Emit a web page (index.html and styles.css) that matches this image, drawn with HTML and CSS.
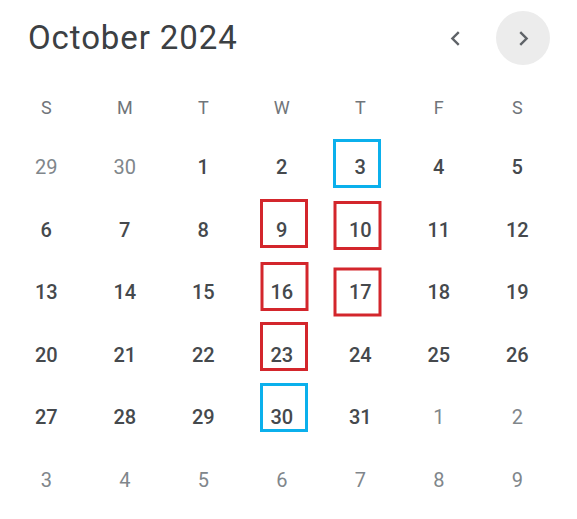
FILE: index.html
```html
<!DOCTYPE html>
<html>
<head>
<meta charset="utf-8">
<link rel="stylesheet" href="styles.css">
</head>
<body>
<div class="cal">
  <div class="head">
    <div class="title">October 2024</div>
    <div class="nav">
      <button class="navbtn" aria-label="Previous month">
        <svg width="24" height="24" viewBox="0 0 24 24"><path d="M15.4 7.4 14 6l-6 6 6 6 1.4-1.4L10.8 12z" fill="#5f6368"/></svg>
      </button>
      <button class="navbtn hover" aria-label="Next month">
        <svg width="24" height="24" viewBox="0 0 24 24"><path d="M8.6 7.4 10 6l6 6-6 6-1.4-1.4 4.6-4.6z" fill="#5f6368"/></svg>
      </button>
    </div>
  </div>
  <div class="grid">
    <div class="dow">S</div><div class="dow">M</div><div class="dow">T</div><div class="dow">W</div><div class="dow">T</div><div class="dow">F</div><div class="dow">S</div>

    <div class="day other">29</div><div class="day other">30</div><div class="day">1</div><div class="day">2</div><div class="day"><span class="mark blue m3"></span>3</div><div class="day">4</div><div class="day">5</div>

    <div class="day">6</div><div class="day">7</div><div class="day">8</div><div class="day"><span class="mark red m9"></span>9</div><div class="day"><span class="mark red m10"></span>10</div><div class="day">11</div><div class="day">12</div>

    <div class="day">13</div><div class="day">14</div><div class="day">15</div><div class="day"><span class="mark red m16"></span>16</div><div class="day"><span class="mark red m17"></span>17</div><div class="day">18</div><div class="day">19</div>

    <div class="day">20</div><div class="day">21</div><div class="day">22</div><div class="day"><span class="mark red m23"></span>23</div><div class="day">24</div><div class="day">25</div><div class="day">26</div>

    <div class="day">27</div><div class="day">28</div><div class="day">29</div><div class="day"><span class="mark blue m30"></span>30</div><div class="day">31</div><div class="day other">1</div><div class="day other">2</div>

    <div class="day other">3</div><div class="day other">4</div><div class="day other">5</div><div class="day other">6</div><div class="day other">7</div><div class="day other">8</div><div class="day other">9</div>
  </div>
</div>
</body>
</html>
```

FILE: styles.css
```css
html, body {
  margin: 0;
  padding: 0;
  background: #fff;
}
body {
  font-family: Roboto, "Noto Sans", sans-serif;
  color: #3c4043;
}
.cal {
  width: 577px;
  height: 519px;
  overflow: hidden;
}
.head {
  display: flex;
  align-items: center;
  justify-content: space-between;
  height: 78px;
  padding: 0 27px 0 28px;
  box-sizing: border-box;
}
.title {
  font-size: 33px;
  font-weight: 400;
  letter-spacing: 0.9px;
  color: #3c4043;
  margin-top: -3px;
}
.nav {
  display: flex;
  align-items: center;
  gap: 14px;
  margin-top: -2px;
}
.navbtn {
  width: 54px;
  height: 54px;
  border: 0;
  border-radius: 50%;
  background: transparent;
  display: flex;
  align-items: center;
  justify-content: center;
  padding: 0;
}
.navbtn svg {
  width: 29px;
  height: 29px;
}
.navbtn.hover {
  background: #ececec;
}
.grid {
  display: grid;
  grid-template-columns: repeat(7, 78.5px);
  grid-template-rows: 58px repeat(6, 62.5px);
  margin-left: 7px;
}
.dow {
  display: flex;
  align-items: center;
  justify-content: center;
  font-size: 18px;
  color: #70757a;
}
.day {
  position: relative;
  display: flex;
  align-items: center;
  justify-content: center;
  font-size: 20px;
  font-weight: 500;
  color: #45494d;
}
.day.other {
  font-weight: 400;
  color: #80868b;
}
.mark {
  position: absolute;
  left: 50%;
  top: 50%;
  width: 48px;
  height: 49px;
  margin-left: -24px;
  margin-top: -24.5px;
  box-sizing: border-box;
  border: 3px solid;
}
.mark.blue { border-color: #0bb0ec; }
.mark.red { border-color: #d3262c; }
.m3 { transform: translate(-3px, -4px); }
.m9 { transform: translate(2px, -6px); }
.m10 { transform: translate(-2.5px, -4px); }
.m16 { transform: translate(2.5px, -6px); }
.m17 { transform: translate(-2.5px, -0.5px); }
.m23 { transform: translate(2px, -8px); }
.m30 { transform: translate(2px, -10px); }
```
